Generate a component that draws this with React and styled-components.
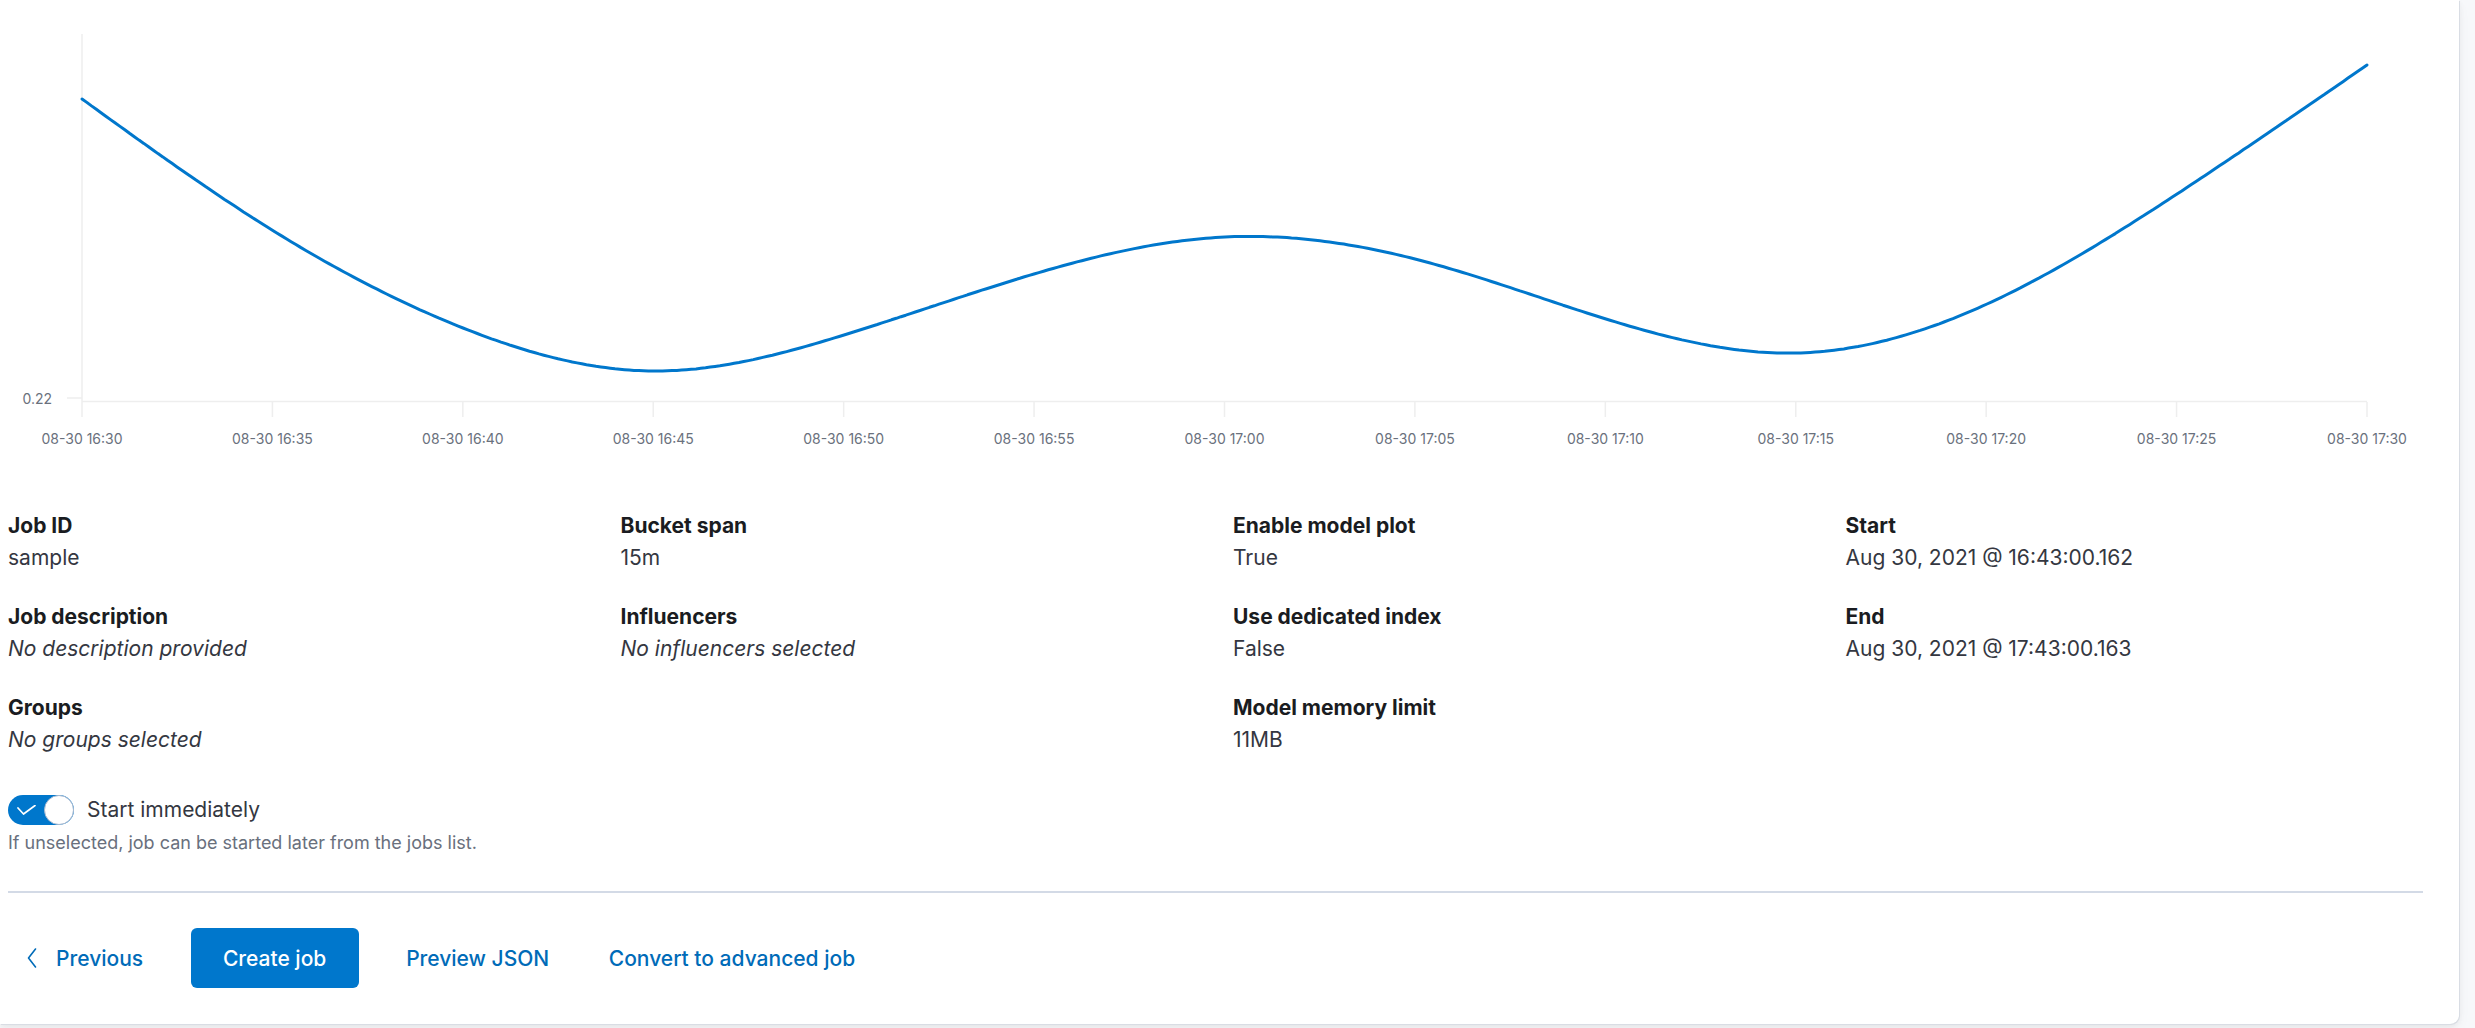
import React from 'react';
import styled, { createGlobalStyle } from 'styled-components';

const GlobalStyle = createGlobalStyle`
  html, body {
    margin: 0;
    padding: 0;
    background: #f7f8fa;
  }
  body {
    font-family: Inter, "Noto Sans", sans-serif;
    -webkit-font-smoothing: antialiased;
  }
  * { box-sizing: border-box; }
`;

const Page = styled.div`
  width: 2475px;
  height: 1028px;
  overflow: hidden;
`;

const Panel = styled.main`
  width: 2459px;
  height: 1024px;
  background: #ffffff;
  border-radius: 0 0 9px 0;
  box-shadow: 1px 1px 0 #d9dde4, 0 2px 6px rgba(0, 0, 0, 0.06), 0 6px 14px rgba(0, 0, 0, 0.04);
  padding: 0 36px 0 8px;
  display: flex;
  flex-direction: column;
`;

const ChartSvg = styled.svg`
  display: block;
  width: 2415px;
  height: 470px;
  flex: none;
`;

const TickText = styled.text`
  font-family: Inter, "Noto Sans", sans-serif;
  font-size: 14px;
  fill: #6a717d;
`;

const DetailsGrid = styled.section`
  display: grid;
  grid-template-columns: repeat(4, 580px);
  column-gap: 32.5px;
  padding-top: 40px;
`;

const DescList = styled.dl`
  margin: 0;
  display: flex;
  flex-direction: column;
`;

const DescItem = styled.div`
  & + & {
    margin-top: 27px;
  }
`;

const DescTitle = styled.dt`
  font-size: 21px;
  line-height: 32px;
  font-weight: 700;
  color: #1a1c21;
`;

const DescValue = styled.dd`
  margin: 0;
  font-size: 21px;
  line-height: 32px;
  color: #343741;
  font-style: ${(p) => (p.$empty ? 'italic' : 'normal')};
`;

const SwitchRow = styled.label`
  margin-top: 39px;
  display: flex;
  align-items: center;
  gap: 13px;
  height: 30px;
`;

const SwitchTrack = styled.span`
  position: relative;
  width: 66px;
  height: 30px;
  border-radius: 15px;
  background: #0077cc;
  flex: none;
`;

const SwitchThumb = styled.span`
  position: absolute;
  right: 0;
  top: 0;
  width: 30px;
  height: 30px;
  border-radius: 50%;
  background: #ffffff;
  border: 1.5px solid #a9b9cf;
`;

const SwitchCheck = styled.svg`
  position: absolute;
  left: 9px;
  top: 10px;
`;

const SwitchLabel = styled.span`
  font-size: 21px;
  line-height: 30px;
  color: #343741;
`;

const HelpText = styled.div`
  margin-top: 6px;
  font-size: 18px;
  line-height: 24px;
  color: #69707d;
`;

const Divider = styled.hr`
  margin: 36px 0 0 0;
  border: none;
  height: 2px;
  background: #d3dae6;
`;

const ButtonRow = styled.nav`
  margin-top: 35px;
  display: flex;
  align-items: center;
  gap: 35.5px;
`;

const EmptyButton = styled.button`
  height: 60px;
  padding: 0 12px;
  border: none;
  background: transparent;
  display: inline-flex;
  align-items: center;
  gap: 12px;
  font-family: Inter, "Noto Sans", sans-serif;
  font-size: 21px;
  font-weight: 500;
  color: #006bb8;
  cursor: pointer;
`;

const FilledButton = styled.button`
  height: 60px;
  min-width: 168px;
  padding: 0 24px;
  border: none;
  border-radius: 6px;
  background: #0077cc;
  color: #ffffff;
  font-family: Inter, "Noto Sans", sans-serif;
  font-size: 21px;
  font-weight: 500;
  cursor: pointer;
`;

const points = [
  [82, 99],
  [272, 230],
  [463, 328],
  [653, 371],
  [844, 335],
  [1034, 274],
  [1225, 237],
  [1415, 259],
  [1606, 319],
  [1796, 353],
  [1987, 304],
  [2177, 194],
  [2367, 65],
];

function splinePath(pts) {
  const n = pts.length;
  const xs = pts.map((p) => p[0]);
  const ys = pts.map((p) => p[1]);
  const h = [];
  for (let i = 0; i < n - 1; i++) h.push(xs[i + 1] - xs[i]);
  const a = new Array(n).fill(0);
  const b = new Array(n).fill(1);
  const c = new Array(n).fill(0);
  const r = new Array(n).fill(0);
  for (let i = 1; i < n - 1; i++) {
    a[i] = h[i - 1];
    b[i] = 2 * (h[i - 1] + h[i]);
    c[i] = h[i];
    r[i] = 6 * ((ys[i + 1] - ys[i]) / h[i] - (ys[i] - ys[i - 1]) / h[i - 1]);
  }
  const cp = new Array(n).fill(0);
  const rp = new Array(n).fill(0);
  cp[0] = c[0] / b[0];
  rp[0] = r[0] / b[0];
  for (let i = 1; i < n; i++) {
    const m = b[i] - a[i] * cp[i - 1];
    cp[i] = c[i] / m;
    rp[i] = (r[i] - a[i] * rp[i - 1]) / m;
  }
  const M = new Array(n).fill(0);
  M[n - 1] = rp[n - 1];
  for (let i = n - 2; i >= 0; i--) M[i] = rp[i] - cp[i] * M[i + 1];
  let d = `M${xs[0]},${ys[0]}`;
  for (let i = 0; i < n - 1; i++) {
    const steps = 40;
    for (let s = 1; s <= steps; s++) {
      const x = xs[i] + (h[i] * s) / steps;
      const A = (xs[i + 1] - x) / h[i];
      const B = (x - xs[i]) / h[i];
      const y =
        A * ys[i] +
        B * ys[i + 1] +
        (((A * A * A - A) * M[i] + (B * B * B - B) * M[i + 1]) * h[i] * h[i]) / 6;
      d += ` L${x.toFixed(1)},${y.toFixed(1)}`;
    }
  }
  return d;
}

const tickLabels = [
  '08-30 16:30', '08-30 16:35', '08-30 16:40', '08-30 16:45', '08-30 16:50',
  '08-30 16:55', '08-30 17:00', '08-30 17:05', '08-30 17:10', '08-30 17:15',
  '08-30 17:20', '08-30 17:25', '08-30 17:30',
];

function Chart() {
  const x0 = 82;
  const x1 = 2367;
  const step = (x1 - x0) / 12;
  return (
    <ChartSvg viewBox="8 0 2415 470">
      <line x1={x0} y1={34} x2={x0} y2={402} stroke="#eeeeee" strokeWidth="1.5" />
      <line x1={x0} y1={401.5} x2={x1} y2={401.5} stroke="#eeeeee" strokeWidth="1.5" />
      <line x1={67} y1={398} x2={x0} y2={398} stroke="#eeeeee" strokeWidth="1.5" />
      <TickText x={52} y={398} textAnchor="end" dominantBaseline="central">0.22</TickText>
      {tickLabels.map((t, i) => {
        const x = x0 + step * i;
        return (
          <g key={t}>
            <line x1={x} y1={402} x2={x} y2={417} stroke="#eeeeee" strokeWidth="1.5" />
            <TickText x={x} y={438} textAnchor="middle" dominantBaseline="central">{t}</TickText>
          </g>
        );
      })}
      <path d={splinePath(points)} fill="none" stroke="#0077cc" strokeWidth="3" strokeLinejoin="round" strokeLinecap="round" />
    </ChartSvg>
  );
}

const columns = [
  [
    { t: 'Job ID', v: 'sample' },
    { t: 'Job description', v: 'No description provided', empty: true },
    { t: 'Groups', v: 'No groups selected', empty: true },
  ],
  [
    { t: 'Bucket span', v: '15m' },
    { t: 'Influencers', v: 'No influencers selected', empty: true },
  ],
  [
    { t: 'Enable model plot', v: 'True' },
    { t: 'Use dedicated index', v: 'False' },
    { t: 'Model memory limit', v: '11MB' },
  ],
  [
    { t: 'Start', v: 'Aug 30, 2021 @ 16:43:00.162' },
    { t: 'End', v: 'Aug 30, 2021 @ 17:43:00.163' },
  ],
];

export default function App() {
  return (
    <Page>
      <GlobalStyle />
      <Panel>
        <Chart />
        <DetailsGrid>
          {columns.map((col, ci) => (
            <DescList key={ci}>
              {col.map((item) => (
                <DescItem key={item.t}>
                  <DescTitle>{item.t}</DescTitle>
                  <DescValue $empty={item.empty}>{item.v}</DescValue>
                </DescItem>
              ))}
            </DescList>
          ))}
        </DetailsGrid>
        <SwitchRow>
          <SwitchTrack>
            <SwitchCheck width="20" height="12" viewBox="0 0 20 12">
              <polyline points="1,3 6.5,9 18,0.5" fill="none" stroke="#ffffff" strokeWidth="1.7" strokeLinecap="round" strokeLinejoin="round" />
            </SwitchCheck>
            <SwitchThumb />
          </SwitchTrack>
          <SwitchLabel>Start immediately</SwitchLabel>
        </SwitchRow>
        <HelpText>If unselected, job can be started later from the jobs list.</HelpText>
        <Divider />
        <ButtonRow>
          <EmptyButton>
            <svg width="24" height="24" viewBox="0 0 24 24">
              <polyline points="15.5,3 8.5,12 15.5,21" fill="none" stroke="#006bb8" strokeWidth="1.6" strokeLinecap="round" strokeLinejoin="round" />
            </svg>
            Previous
          </EmptyButton>
          <FilledButton>Create job</FilledButton>
          <EmptyButton>Preview JSON</EmptyButton>
          <EmptyButton>Convert to advanced job</EmptyButton>
        </ButtonRow>
      </Panel>
    </Page>
  );
}
